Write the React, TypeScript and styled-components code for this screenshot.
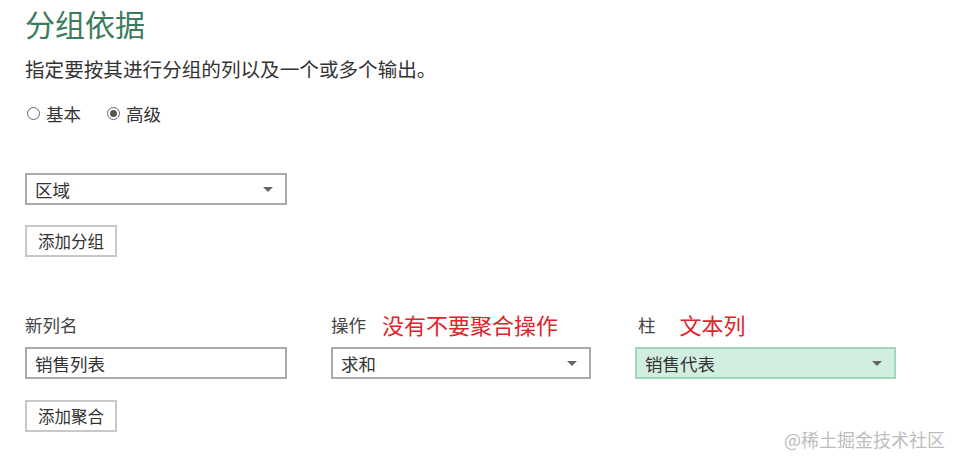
import React from "react";
import styled, { createGlobalStyle } from "styled-components";

const Global = createGlobalStyle`
  html, body { margin: 0; padding: 0; background: #fff; }
  body { font-family: "Noto Sans CJK SC", "Noto Sans", sans-serif; color: #333; }
  * { box-sizing: border-box; }
`;

const Page = styled.div`
  position: relative;
  width: 953px;
  height: 459px;
  padding: 2px 0 0 25px;
  overflow: hidden;
`;

const Title = styled.h1`
  margin: 0;
  font-size: 30px;
  font-weight: 400;
  line-height: 42px;
  color: #3b7d5b;
`;

const Subtitle = styled.p`
  margin: 12px 0 0;
  font-size: 19.6px;
  line-height: 26px;
  color: #333;
`;

const RadioRow = styled.div`
  display: flex;
  align-items: center;
  gap: 24px;
  margin-top: 18px;
  height: 26px;
`;

const RadioItem = styled.label`
  display: flex;
  align-items: center;
  gap: 6px;
  font-size: 17.5px;
  color: #333;
`;

const RadioDot = styled.span<{ $checked?: boolean }>`
  flex: 0 0 13px;
  width: 13px;
  height: 13px;
  border-radius: 50%;
  border: 1px solid #666;
  display: inline-flex;
  align-items: center;
  justify-content: center;
  margin-left: 2px;
  &::after {
    content: "";
    width: 7px;
    height: 7px;
    border-radius: 50%;
    background: ${(p) => (p.$checked ? "#555" : "transparent")};
  }
`;

const Box = styled.div<{ $green?: boolean }>`
  display: flex;
  align-items: center;
  justify-content: space-between;
  height: 32px;
  padding: 0 12px 0 8px;
  font-size: 17.5px;
  color: #333;
  background: ${(p) => (p.$green ? "#d2eee0" : "#fff")};
  border: 2px solid ${(p) => (p.$green ? "#a3d7bb" : "#ababab")};
`;

const Arrow = styled.span`
  width: 0;
  height: 0;
  border-left: 5px solid transparent;
  border-right: 5px solid transparent;
  border-top: 5px solid #666;
`;

const GroupSelect = styled(Box)`
  width: 262px;
  margin-top: 47px;
`;

const Button = styled.button`
  display: block;
  width: 92px;
  height: 32px;
  padding: 0;
  background: #fff;
  border: 2px solid #c8c8c8;
  font-family: inherit;
  font-size: 16.5px;
  color: #333;
`;

const GroupButton = styled(Button)`
  margin-top: 20px;
`;

const Grid = styled.div`
  display: grid;
  grid-template-columns: 262px 260px 261px;
  column-gap: 44px;
  row-gap: 9px;
  margin-top: 53px;
`;

const Label = styled.div<{ $indent?: number }>`
  display: flex;
  align-items: center;
  height: 28px;
  font-size: 17.5px;
  color: #444;
  padding-left: ${(p) => p.$indent ?? 0}px;
`;

const Note = styled.span<{ $gap: number }>`
  margin-left: ${(p) => p.$gap}px;
  font-size: 22px;
  color: #e0242b;
`;

const AggButton = styled(Button)`
  margin-top: 21px;
`;

const Watermark = styled.div`
  position: absolute;
  right: 8px;
  bottom: 7px;
  font-size: 18px;
  color: #bdbdbd;
`;

export default function App() {
  return (
    <Page>
      <Global />
      <Title>分组依据</Title>
      <Subtitle>指定要按其进行分组的列以及一个或多个输出。</Subtitle>
      <RadioRow>
        <RadioItem>
          <RadioDot />
          基本
        </RadioItem>
        <RadioItem>
          <RadioDot $checked />
          高级
        </RadioItem>
      </RadioRow>
      <GroupSelect>
        <span>区域</span>
        <Arrow />
      </GroupSelect>
      <GroupButton>添加分组</GroupButton>
      <Grid>
        <Label>新列名</Label>
        <Label>
          操作<Note $gap={16}>没有不要聚合操作</Note>
        </Label>
        <Label $indent={3}>
          柱<Note $gap={24}>文本列</Note>
        </Label>
        <Box>
          <span>销售列表</span>
        </Box>
        <Box>
          <span>求和</span>
          <Arrow />
        </Box>
        <Box $green>
          <span>销售代表</span>
          <Arrow />
        </Box>
      </Grid>
      <AggButton>添加聚合</AggButton>
      <Watermark>@稀土掘金技术社区</Watermark>
    </Page>
  );
}
